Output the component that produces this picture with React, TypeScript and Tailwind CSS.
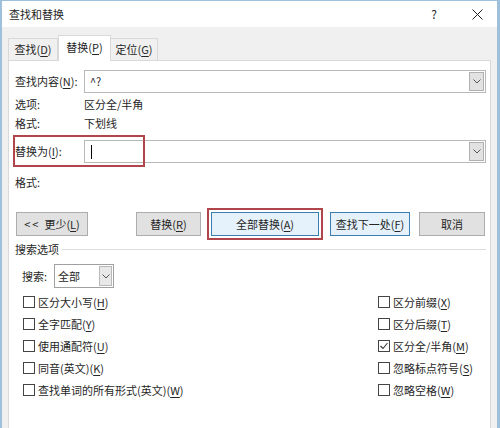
import React from "react";

const U = ({ c }: { c: string }) => (
  <span className="underline underline-offset-[2px] decoration-[1px]">{c}</span>
);

const Chevron = () => (
  <svg width="8" height="5" viewBox="0 0 8 5" className="block">
    <path d="M0.5 0.5 L4 4 L7.5 0.5" fill="none" stroke="#555" strokeWidth="1" />
  </svg>
);

function Combo({ children }: { children?: React.ReactNode }) {
  return (
    <div className="flex h-[23px] w-[402px] border border-[#b8b8b8] bg-white">
      <div className="flex flex-1 items-center pl-[4px]">{children}</div>
      <div className="my-[1px] mr-[1px] flex w-[15px] items-center justify-center border border-[#b0b0b0] bg-[#e2e2e2]">
        <Chevron />
      </div>
    </div>
  );
}

function Check({ label, checked }: { label: React.ReactNode; checked?: boolean }) {
  return (
    <div className="flex h-[22px] items-center">
      <div className="flex h-[12px] w-[12px] items-center justify-center border border-[#444] bg-white">
        {checked && (
          <svg width="10" height="10" viewBox="0 0 10 10" className="block">
            <path d="M1.5 5 L4 7.5 L8.5 2" fill="none" stroke="#333" strokeWidth="1.1" />
          </svg>
        )}
      </div>
      <span className="ml-[3px]">{label}</span>
    </div>
  );
}

function Btn({
  children,
  w,
  active,
}: {
  children: React.ReactNode;
  w: string;
  active?: boolean;
}) {
  return (
    <div
      className={
        "flex h-[24px] items-center justify-center border " +
        w +
        " " +
        (active ? "border-[#3a7db0] bg-[#e5f1fb]" : "border-[#adadad] bg-[#e1e1e1]")
      }
    >
      {children}
    </div>
  );
}

export default function App() {
  return (
    <div
      className="flex h-[428px] w-[500px] flex-col overflow-hidden border-t border-l-2 border-r-[3px] border-[#9fc0da] bg-[#f0f0f0] text-[11px] leading-none text-[#262626]"
      style={{ fontFamily: '"Noto Sans CJK SC", "Noto Sans", sans-serif' }}
    >
      {/* title bar */}
      <div className="flex h-[26px] items-center bg-white pl-[7px]">
        <span className="flex-1">查找和替换</span>
        <span className="mr-[35px] text-[12px]">?</span>
        <svg width="11" height="11" viewBox="0 0 11 11" className="mr-[14px] block">
          <path d="M0.5 0.5 L10.5 10.5 M10.5 0.5 L0.5 10.5" stroke="#222" strokeWidth="1" />
        </svg>
      </div>

      {/* tabs */}
      <div className="flex h-[33px] items-end pl-[6px]">
        <div className="flex h-[22px] w-[50px] items-center justify-center border border-b-0 border-[#d9d9d9] bg-[#f0f0f0]">
          查找(<U c="D" />)
        </div>
        <div className="relative z-10 -mb-px flex h-[26px] w-[53px] items-center justify-center border border-b-0 border-[#d9d9d9] bg-white pb-[2px]">
          替换(<U c="P" />)
        </div>
        <div className="flex h-[22px] w-[47px] items-center justify-center border border-b-0 border-l-0 border-[#d9d9d9] bg-[#f0f0f0]">
          定位(<U c="G" />)
        </div>
      </div>

      {/* panel */}
      <div className="ml-[6px] mr-[6px] flex flex-1 flex-col border border-b-0 border-[#d9d9d9] bg-white">
        {/* find row */}
        <div className="mt-[9px] flex items-center pl-[6px]">
          <div className="w-[69px]">
            查找内容(<U c="N" />):
          </div>
          <Combo>
            <span className="pl-[1px]">^?</span>
          </Combo>
        </div>
        <div className="mt-[2px] flex h-[19px] items-center pl-[6px]">
          <div className="w-[69px]">选项:</div>
          <div>区分全/半角</div>
        </div>
        <div className="flex h-[19px] items-center pl-[6px]">
          <div className="w-[69px]">格式:</div>
          <div>下划线</div>
        </div>

        {/* replace row */}
        <div className="relative mt-[7px] flex items-center pl-[6px]">
          <div className="w-[69px]">
            替换为(<U c="I" />):
          </div>
          <Combo>
            <div className="ml-[2px] h-[14px] w-px bg-black" />
          </Combo>
          <div className="pointer-events-none absolute left-[4px] top-[-5px] h-[32px] w-[132px] border-2 border-[#b0454b]" />
        </div>
        <div className="mt-[10px] flex h-[19px] items-center pl-[6px]">
          <div>格式:</div>
        </div>

        {/* buttons */}
        <div className="mt-[16px] flex items-center pl-[7px]">
          <Btn w="w-[72px]">
            <span className="mr-[4px] tracking-[2px]">&lt;&lt;</span>更少(<U c="L" />)
          </Btn>
          <div className="ml-[48px]">
            <Btn w="w-[65px]">
              替换(<U c="R" />)
            </Btn>
          </div>
          <div className="ml-[6px] border-2 border-[#b0454b] p-[2px]">
            <Btn w="w-[108px]" active>
              全部替换(<U c="A" />)
            </Btn>
          </div>
          <div className="ml-[7px]">
            <Btn w="w-[80px]" active>
              查找下一处(<U c="F" />)
            </Btn>
          </div>
          <div className="ml-[9px]">
            <Btn w="w-[66px]">取消</Btn>
          </div>
        </div>

        {/* search options */}
        <div className="mt-[1px] flex h-[16px] items-center pl-[6px] pr-[4px]">
          <span>搜索选项</span>
          <div className="ml-[3px] h-px flex-1 bg-[#dcdcdc]" />
        </div>
        <div className="mt-[7px] flex items-center pl-[13px]">
          <div className="w-[32px]">搜索:</div>
          <div className="flex h-[24px] w-[60px] border border-[#a0a0a0] bg-white">
            <div className="flex flex-1 items-center pl-[3px]">全部</div>
            <div className="my-[1px] mr-[1px] flex w-[13px] items-center justify-center border border-[#b8b8b8] bg-[#e8e8e8]">
              <Chevron />
            </div>
          </div>
        </div>

        <div className="mt-[3px] flex pl-[14px]">
          <div className="w-[355px]">
            <Check label={<>区分大小写(<U c="H" />)</>} />
            <Check label={<>全字匹配(<U c="Y" />)</>} />
            <Check label={<>使用通配符(<U c="U" />)</>} />
            <Check label={<>同音(英文)(<U c="K" />)</>} />
            <Check label={<>查找单词的所有形式(英文)(<U c="W" />)</>} />
          </div>
          <div>
            <Check label={<>区分前缀(<U c="X" />)</>} />
            <Check label={<>区分后缀(<U c="T" />)</>} />
            <Check checked label={<>区分全/半角(<U c="M" />)</>} />
            <Check label={<>忽略标点符号(<U c="S" />)</>} />
            <Check label={<>忽略空格(<U c="W" />)</>} />
          </div>
        </div>
      </div>
    </div>
  );
}
